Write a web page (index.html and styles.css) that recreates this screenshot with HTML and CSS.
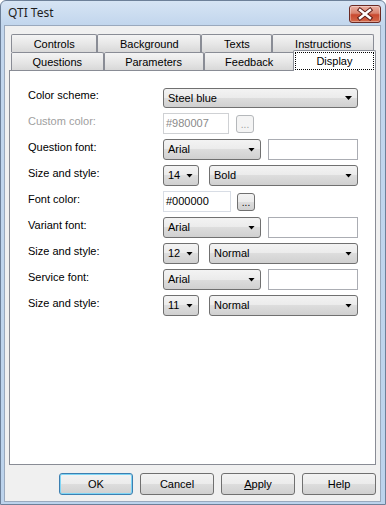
FILE: index.html
```html
<!DOCTYPE html>
<html lang="en">
<head>
    <meta charset="UTF-8">
    <title>QTI Test</title>
    <link rel="stylesheet" href="styles.css">
</head>
<body>
    <div class="window">
        <div class="titlebar">
            <span class="title">QTI Test</span>
            <button class="close" aria-label="Close">
                <svg width="30" height="16" viewBox="0 0 30 16">
                    <path d="M10 4 L20 12 M20 4 L10 12" stroke="#5a1a14" stroke-width="4.4" stroke-linecap="square" fill="none"/>
                    <path d="M10 4 L20 12 M20 4 L10 12" stroke="#fff" stroke-width="2.4" stroke-linecap="square" fill="none"/>
                </svg>
            </button>
        </div>

        <div class="client">
            <div class="tab-row">
                <div class="tab">Controls</div>
                <div class="tab">Background</div>
                <div class="tab">Texts</div>
                <div class="tab">Instructions</div>
            </div>
            <div class="tab-row">
                <div class="tab">Questions</div>
                <div class="tab">Parameters</div>
                <div class="tab">Feedback</div>
                <div class="tab active"><span class="focus">Display</span></div>
            </div>

            <div class="panel">
                <div class="form">
                    <div class="label">Color scheme:</div>
                    <div class="field">
                        <div class="combo w195 short"><span class="value">Steel blue</span></div>
                    </div>

                    <div class="label disabled">Custom color:</div>
                    <div class="field">
                        <div class="input w66 disabled">#980007</div>
                        <button class="dots disabled">...</button>
                    </div>

                    <div class="label">Question font:</div>
                    <div class="field">
                        <div class="combo w98"><span class="value">Arial</span></div>
                        <div class="input w90"></div>
                    </div>

                    <div class="label">Size and style:</div>
                    <div class="field wide">
                        <div class="combo w36"><span class="value">14</span></div>
                        <div class="combo w149"><span class="value">Bold</span></div>
                    </div>

                    <div class="label">Font color:</div>
                    <div class="field tight">
                        <div class="input w68 light">#000000</div>
                        <button class="dots">...</button>
                    </div>

                    <div class="label">Variant font:</div>
                    <div class="field">
                        <div class="combo w98"><span class="value">Arial</span></div>
                        <div class="input w90"></div>
                    </div>

                    <div class="label">Size and style:</div>
                    <div class="field wide">
                        <div class="combo w36"><span class="value">12</span></div>
                        <div class="combo w149"><span class="value">Normal</span></div>
                    </div>

                    <div class="label">Service font:</div>
                    <div class="field">
                        <div class="combo w98"><span class="value">Arial</span></div>
                        <div class="input w90"></div>
                    </div>

                    <div class="label">Size and style:</div>
                    <div class="field wide">
                        <div class="combo w36"><span class="value">11</span></div>
                        <div class="combo w149"><span class="value">Normal</span></div>
                    </div>
                </div>
            </div>

            <div class="buttons">
                <button class="btn default">OK</button>
                <button class="btn">Cancel</button>
                <button class="btn"><u>A</u>pply</button>
                <button class="btn">Help</button>
            </div>
        </div>
    </div>
</body>
</html>
```

FILE: styles.css
```css
body {
    margin: 0;
    font-family: "Liberation Sans", Arial, sans-serif;
    font-size: 11px;
    color: #000;
}
button {
    font: inherit;
    color: inherit;
    margin: 0;
    padding: 0;
}
.window {
    box-sizing: border-box;
    width: 386px;
    height: 505px;
    display: flex;
    flex-direction: column;
    border: 1px solid #6d8099;
    border-radius: 6px 6px 0 0;
    padding: 0 4px 2px 3px;
    background: linear-gradient(#d6e4f4, #c2d6ed 24px, #bcd3ec);
}
.titlebar {
    height: 24px;
    display: flex;
    justify-content: space-between;
    align-items: flex-start;
    padding-left: 4px;
}
.title {
    font-family: "Noto Sans", "Open Sans", sans-serif;
    font-size: 12px;
    line-height: 24px;
    color: #1e1e1e;
}
.close {
    margin-top: 4px;
    width: 32px;
    height: 18px;
    box-sizing: border-box;
    border: 1px solid #6b2a24;
    border-radius: 3px;
    background: linear-gradient(#eab0a3, #d98470 45%, #c9492f 55%, #d3694b);
    box-shadow: inset 0 0 0 1px rgba(255,255,255,0.35);
    display: flex;
    align-items: center;
    justify-content: center;
}
.close svg {
    display: block;
}
.client {
    flex: 1;
    display: flex;
    flex-direction: column;
    background: #f0f0f0;
    border: 1px solid #9aa9bd;
    padding: 8px 4px 6px 4px;
}
.tab-row {
    display: flex;
    height: 18px;
    padding: 0 2px;
}
.tab {
    flex: 1 1 auto;
    box-sizing: border-box;
    border: 1px solid #898c95;
    border-bottom: 0;
    border-radius: 2px 2px 0 0;
    background: linear-gradient(#f4f4f4, #e6e6e6 55%, #d8d8d8);
    display: flex;
    align-items: center;
    justify-content: center;
    padding: 2px 6px 0;
    line-height: 13px;
    white-space: nowrap;
}
.tab.active {
    position: relative;
    z-index: 1;
    margin: -2px -2px -1px;
    padding: 1px;
    background: #fff;
}
.focus {
    flex: 1;
    align-self: stretch;
    border: 1px dotted #000;
    padding: 0 6px;
    display: flex;
    align-items: center;
    justify-content: center;
}
.panel {
    height: 395px;
    box-sizing: border-box;
    border: 1px solid #898c95;
    background: #fff;
    padding: 16px 0 0 18px;
}
.form {
    display: grid;
    grid-template-columns: 135px auto;
    grid-auto-rows: 21px;
    row-gap: 5px;
}
.label {
    line-height: 14px;
    padding-top: 1px;
    white-space: nowrap;
}
.label.disabled {
    color: #a0a0a0;
}
.field {
    display: flex;
    align-items: center;
    gap: 7px;
}
.field.wide {
    gap: 10px;
}
.field.tight {
    gap: 6px;
}
.combo {
    box-sizing: border-box;
    height: 21px;
    display: flex;
    align-items: center;
    border: 1px solid #707070;
    border-radius: 3px;
    padding: 0 5px 0 4px;
    background: linear-gradient(#f3f3f3, #ebebeb 50%, #dddddd 50%, #d0d0d0);
    line-height: 13px;
}
.combo.short {
    height: 20px;
    align-self: flex-end;
}
.combo .value {
    flex: 1;
    white-space: nowrap;
}
.combo::after {
    content: "";
    width: 7px;
    height: 4px;
    background: #000;
    clip-path: polygon(0 0, 100% 0, 50% 100%);
}
.input {
    box-sizing: border-box;
    height: 21px;
    border: 1px solid #abadb3;
    background: #fff;
    padding: 3px 2px 0;
    line-height: 13px;
}
.input.light {
    border-color: #d8dde5;
}
.input.disabled {
    border-color: #cfd1d4;
    color: #8a8a8a;
}
.dots {
    box-sizing: border-box;
    width: 18px;
    height: 18px;
    border: 1px solid #707070;
    border-radius: 3px;
    background: linear-gradient(#f3f3f3, #ebebeb 50%, #dddddd 50%, #d0d0d0);
    line-height: 13px;
    font-size: 10px;
    padding-top: 2px;
}
.dots.disabled {
    border-color: #b5b8bb;
    background: #f4f4f4;
    color: #a0a0a0;
}
.w36 { width: 36px; }
.w66 { width: 66px; }
.w68 { width: 68px; }
.w90 { width: 90px; }
.w98 { width: 98px; }
.w149 { width: 149px; }
.w195 { width: 195px; }
.buttons {
    display: flex;
    justify-content: flex-end;
    gap: 7px;
    margin-top: 8px;
}
.btn {
    box-sizing: border-box;
    width: 74px;
    height: 22px;
    border: 1px solid #707070;
    border-radius: 3px;
    background: linear-gradient(#f3f3f3, #ebebeb 50%, #dddddd 50%, #d0d0d0);
    line-height: 13px;
}
.btn.default {
    border-color: #3c7fb1;
    box-shadow: inset 0 0 0 1px #7fd5f5;
}
.btn u {
    text-decoration: underline;
}
```
